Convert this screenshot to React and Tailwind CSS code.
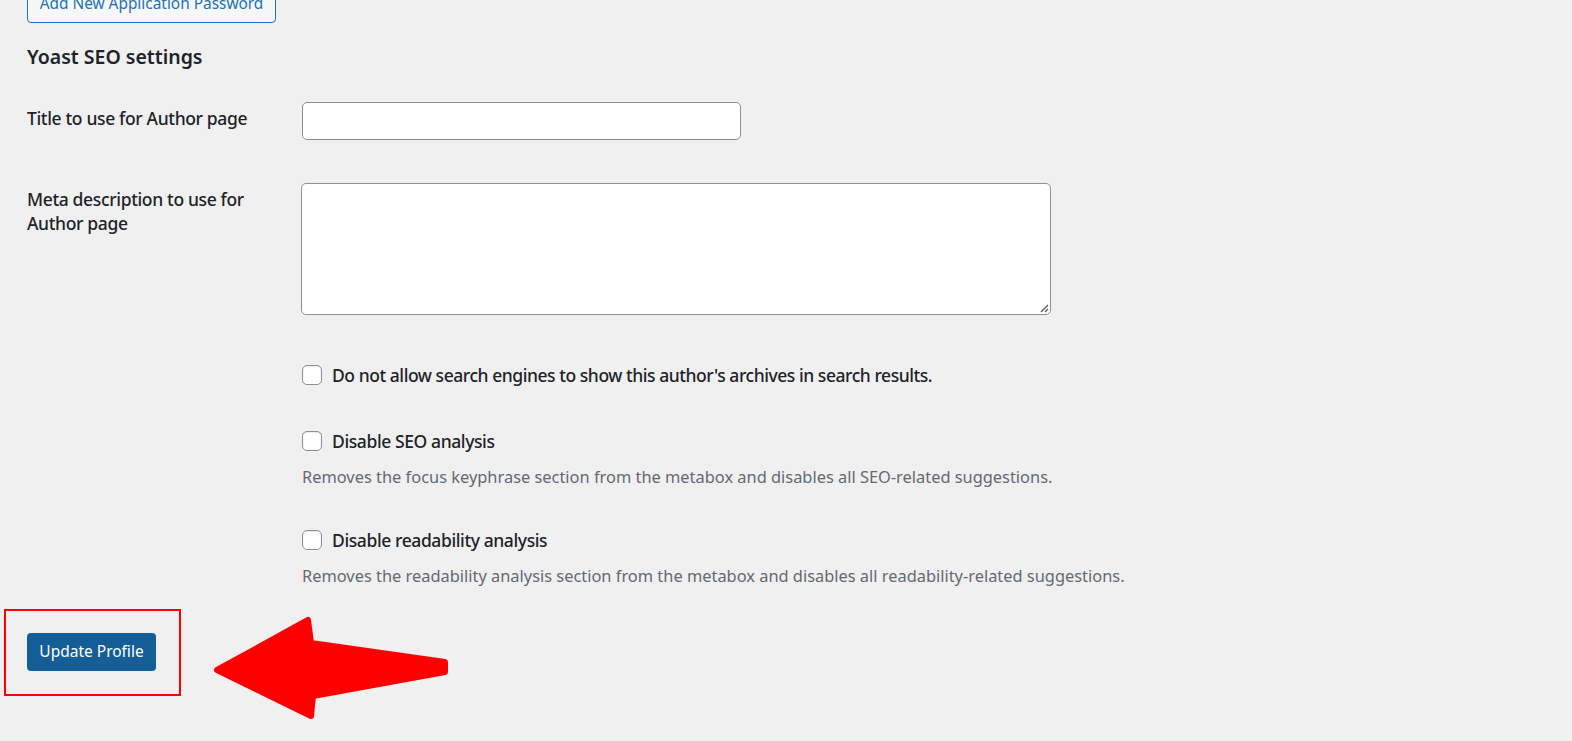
import React from "react";

function Checkbox() {
  return (
    <span className="block w-[20px] h-[20px] shrink-0 rounded-[5px] border border-[#8c8f94] bg-white shadow-[inset_0_1px_2px_rgba(0,0,0,0.1)]" />
  );
}

export default function App() {
  return (
    <div className="relative min-h-[741px] overflow-hidden bg-[#f0f0f1] pl-[27px] font-['Noto_Sans',_sans-serif] text-[#1d2327]">
      <button className="mt-[-15px] flex h-[38px] w-[249px] items-center justify-center rounded-[4px] border border-[#2271b1] bg-[#f6f7f7] text-[15.4px] leading-none text-[#2271b1]">
        Add New Application Password
      </button>

      <h2 className="mt-[20px] text-[19.5px] font-semibold leading-[28px]">Yoast SEO settings</h2>

      <div className="mt-[31px] flex">
        <div className="w-[275px] shrink-0 pt-[4px] text-[17.5px] font-medium tracking-[-0.35px] leading-[24px]">
          Title to use for Author page
        </div>
        <div className="h-[38px] w-[439px] rounded-[5px] border border-[#8c8f94] bg-white" />
      </div>

      <div className="mt-[43px] flex">
        <div className="w-[275px] shrink-0 pt-[4px] pr-[20px] text-[17.5px] font-medium tracking-[-0.35px] leading-[24px]">
          Meta description to use for Author page
        </div>
        <div className="relative h-[132px] w-[750px] -ml-[1px] rounded-[5px] border border-[#8c8f94] bg-white">
          <svg className="absolute bottom-[1px] right-[1px]" width="10" height="10" viewBox="0 0 10 10">
            <path d="M9 2 L2 9 M9 6 L6 9" stroke="#555" strokeWidth="1.3" />
          </svg>
        </div>
      </div>

      <div className="ml-[275px]">
        <label className="mt-[50px] flex items-center gap-[10px] text-[17.5px] font-medium tracking-[-0.45px] leading-[20px]">
          <Checkbox />
          <span>Do not allow search engines to show this author's archives in search results.</span>
        </label>

        <label className="mt-[46px] flex items-center gap-[10px] text-[17.5px] font-medium tracking-[-0.4px] leading-[20px]">
          <Checkbox />
          <span>Disable SEO analysis</span>
        </label>
        <p className="mt-[14px] text-[16.4px] leading-[24px] text-[#646970]">
          Removes the focus keyphrase section from the metabox and disables all SEO-related suggestions.
        </p>

        <label className="mt-[41px] flex items-center gap-[10px] text-[17.5px] font-medium tracking-[-0.4px] leading-[20px]">
          <Checkbox />
          <span>Disable readability analysis</span>
        </label>
        <p className="mt-[14px] text-[16.4px] leading-[24px] text-[#646970]">
          Removes the readability analysis section from the metabox and disables all readability-related suggestions.
        </p>
      </div>

      <button className="mt-[45px] flex h-[38px] w-[129px] items-center justify-center rounded-[4px] bg-[#135e96] text-[15.5px] leading-none text-white">
        Update Profile
      </button>

      <div className="pointer-events-none absolute left-[4px] top-[609px] h-[87px] w-[177px] border-2 border-[#ff0000]" />
      <svg className="pointer-events-none absolute left-0 top-0" width="500" height="741" viewBox="0 0 500 741">
        <polygon
          points="217,670 308,620 311,643 445,662 445,672 313,696 311,716"
          fill="#ff0000"
          stroke="#ff0000"
          strokeWidth="6"
          strokeLinejoin="round"
        />
      </svg>
    </div>
  );
}
